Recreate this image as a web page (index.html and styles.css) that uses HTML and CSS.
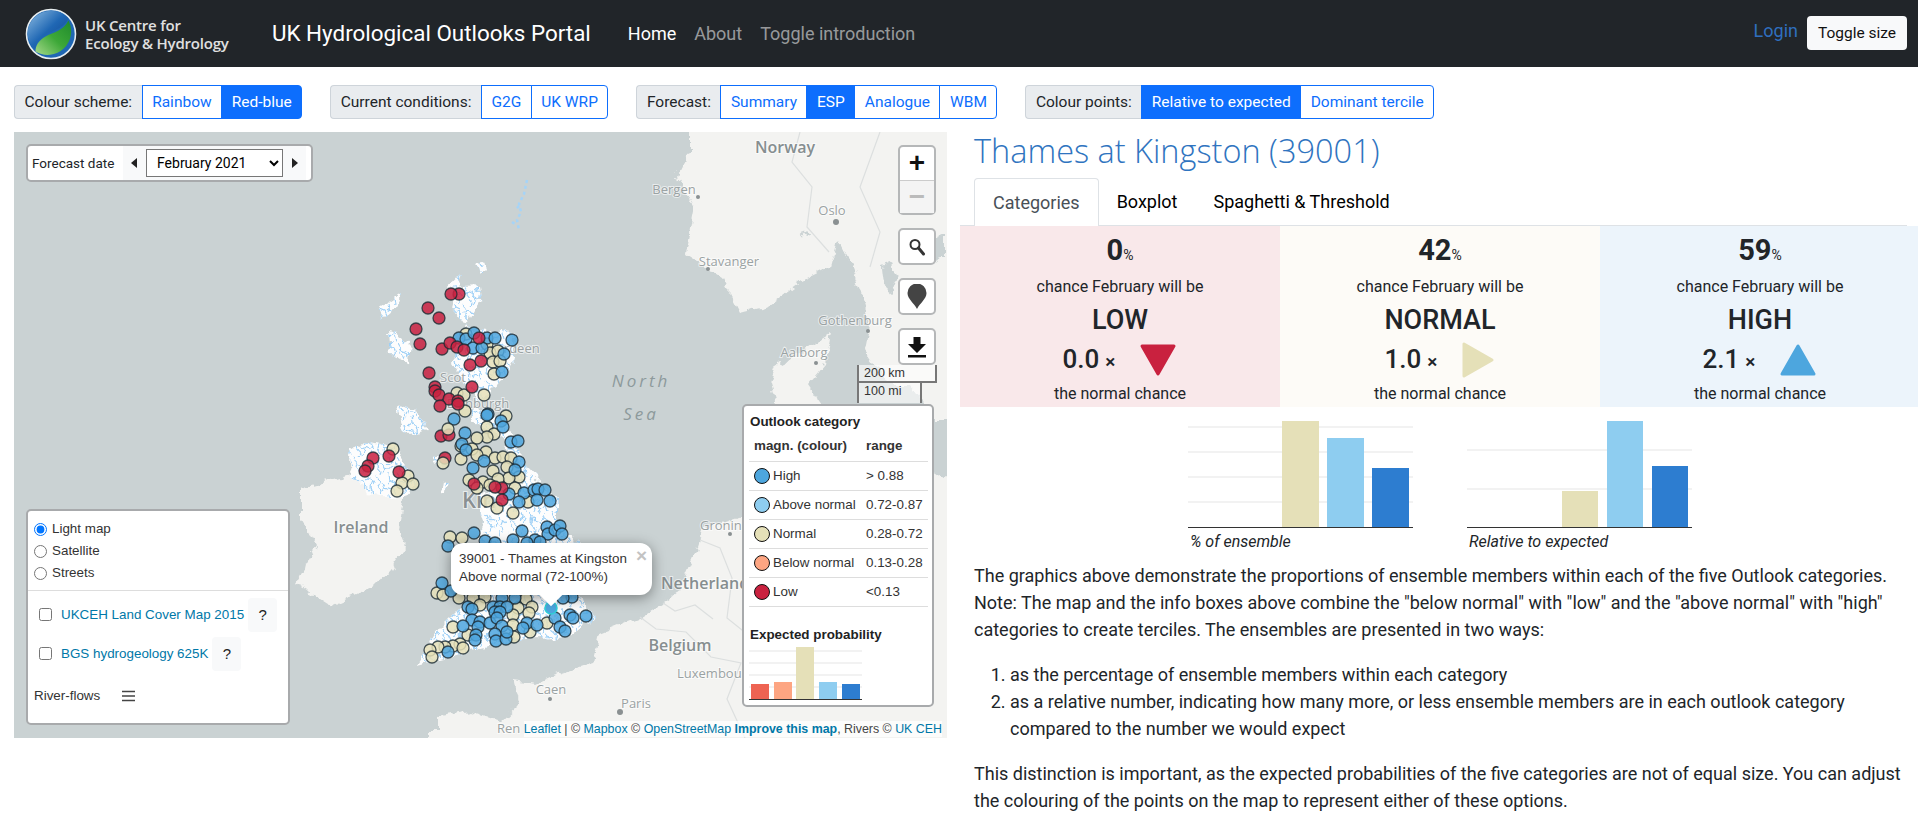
FILE: index.html
```html
<!DOCTYPE html>
<html lang="en">

<head>
  <meta charset="UTF-8">
  <meta name="viewport" content="width=device-width, initial-scale=1.0">
  <title>UK Hydrological Outlooks Portal</title>
  <link rel="stylesheet" href="styles.css">
</head>

<body>
  <nav class="navbar">
    <div class="logo">
      <svg class="logo-mark" width="52" height="52" viewBox="0 0 52 52">
        <defs>
          <linearGradient id="logoBlue" x1="0" y1="0" x2="1" y2="1">
            <stop offset="0" stop-color="#8fbde2" />
            <stop offset=".5" stop-color="#1f67b4" />
            <stop offset="1" stop-color="#123f86" />
          </linearGradient>
          <linearGradient id="logoGreen" x1="0" y1="1" x2="1" y2="0">
            <stop offset="0" stop-color="#a5d88a" />
            <stop offset=".5" stop-color="#3da838" />
            <stop offset="1" stop-color="#1f8a2c" />
          </linearGradient>
        </defs>
        <circle cx="26" cy="26" r="24.5" fill="#1f67b4" stroke="#e8eef0" stroke-width="1.6" />
        <path d="M2.5 26a23.5 23.5 0 0 1 41-15.5c-6 11-14 11-23 16-7 4-10 9-10 15A23.5 23.5 0 0 1 2.5 26z" fill="url(#logoBlue)" />
        <path d="M10.5 43.500c0-6 3-11 10-15 9-5 17-5 23-16A23.500 23.500 0 0 1 10.500 43.500z" fill="url(#logoGreen)" />
      </svg>
      <div class="logo-text">UK Centre for<br>Ecology &amp; Hydrology</div>
    </div>
    <a class="brand" href="#">UK Hydrological Outlooks Portal</a>
    <ul class="nav-links">
      <li><a class="active" href="#">Home</a></li>
      <li><a href="#">About</a></li>
      <li><a href="#">Toggle introduction</a></li>
    </ul>
    <a class="login" href="#">Login</a>
    <button class="toggle-size">Toggle size</button>
  </nav>

  <div class="toolbar">
    <div class="input-group">
      <span class="group-label">Colour scheme:</span>
      <button class="opt">Rainbow</button>
      <button class="opt on">Red-blue</button>
    </div>
    <div class="input-group">
      <span class="group-label">Current conditions:</span>
      <button class="opt">G2G</button>
      <button class="opt">UK WRP</button>
    </div>
    <div class="input-group">
      <span class="group-label">Forecast:</span>
      <button class="opt">Summary</button>
      <button class="opt on">ESP</button>
      <button class="opt">Analogue</button>
      <button class="opt">WBM</button>
    </div>
    <div class="input-group">
      <span class="group-label">Colour points:</span>
      <button class="opt on">Relative to expected</button>
      <button class="opt">Dominant tercile</button>
    </div>
  </div>

  <main class="content">
    <div class="map">
      <svg class="basemap" width="933" height="606" viewBox="14 132 933 606">
        <defs>
          <pattern id="rivers" width="22" height="19" patternUnits="userSpaceOnUse">
            <path d="M2 1l3 5-1 4 4 5-1 4M5 6l5 2 2 4 5 2M12 12l-2 5M15 0l1 5 4 2 2 4M16 5l-3 2M20 7l-2 5 2 7" />
          </pattern>
          <filter id="rough" x="-5%" y="-5%" width="110%" height="110%">
            <feTurbulence type="fractalNoise" baseFrequency=".09" numOctaves="3" seed="4" />
            <feDisplacementMap in="SourceGraphic" scale="11" xChannelSelector="R" yChannelSelector="G" />
          </filter>
          <filter id="soft">
            <feGaussianBlur stdDeviation=".35" />
          </filter>
        </defs>

        <g filter="url(#rough)">
          <!-- Norway and Sweden -->
          <path class="land" d="M695 132l-5 18-13 27 18 31-9 47 36 23 18 35 28-7 32-24 31-15 7-27 12 23 10 27 10 35-5 25 25 35 20 0 20 25 18 0V132z" />
          <path class="land" d="M690 115h280v40h-280zM935 120h30v300h-30z" />
          <!-- France up to Denmark -->
          <path class="land" d="M437 738v-20l33-6 30 10 18-17-6-25 25 3 13-6 43-14 7-30 40-16 23-14 17-13 15-35 9-27 41-12 35-16-10-60 5-40-5-16 7-20 28-14 26-17-6 32-17 20 17 25-25 20 30 10h40l35 10 43 30v258z" />
          <path class="land" d="M430 730h540v30h-540zM935 480h30v270h-30z" />
          <path class="land" d="M800 420l18-6 8 14-14 8z" />
          <!-- Ireland -->
          <path class="land" d="M349 450l18-8 28 4 22 35-13 18 0 2-5 27 7 19-16 24-14 15-45 20-36-23 22-36-16-27 0-31 30-8 20-6-2-6z" />

          <!-- Great Britain, the rivers reuse the same outlines -->
          <g class="land white">
            <path id="gb" d="M447 288l32-2 2 12-18 31 50 4v27l-14 24-13 11-14 8 36 23 19 40 31 35v23l21 20-5 40 20 34-27 19-55 4-46 12-50 12 23-36 40-40-4-35 9-31-5-27 41-12v-16l-18-31-32-15 5-24-23-35 14-35-14-20 9-35z" />
            <path id="isles" d="M401 294l-4 12-16 15-2-12zM388 333l22 7-2 25-18-10zM397 405l18 5 13 20-23 5zM430 458l17-2-7 14zM442 482l6-2-2 12-6 2zM476 262l8-1 2 8-6 6z" />
            <path id="ulster" d="M351 475l-2-25 18-8 28 4 22 35-13 18-37-6z" />
          </g>
          <use href="#gb" fill="url(#rivers)" />
          <use href="#isles" fill="url(#rivers)" />
          <use href="#ulster" fill="url(#rivers)" />

          <!-- lakes -->
          <path class="lake" d="M880 267l12-4 6 14-6 16-10-8zM845 250l5 16 4-4zM800 232l12 4-6 3zM930 240l14-6v24l-10 4z" />
        </g>

        <path class="shetland" d="M527 180l-3 14-5 10 2 8-4 8 2 10M512 222l3 2M519 206l-4 4" />
        <path class="border" d="M800 132l-8 30 20 25-5 40 22 25M880 132l-20 55 20 45-10 35M640 617l16 12 30 3 25 25 30 6 -14 36 18 39M700 540l20 8 12 30-5 40 25 20M663 603l12 8 20-6 18 14M745 516l8 18" />

        <!-- place names -->
        <text class="place big" x="785" y="153" text-anchor="middle">Norway</text>
        <text class="place" x="674" y="194" text-anchor="middle">Bergen</text>
        <text class="place" x="832" y="215" text-anchor="middle">Oslo</text>
        <text class="place" x="729" y="266" text-anchor="middle">Stavanger</text>
        <text class="place" x="855" y="325" text-anchor="middle">Gothenburg</text>
        <text class="place" x="804" y="357" text-anchor="middle">Aalborg</text>
        <text class="place sea" x="641" y="387" text-anchor="middle">North</text>
        <text class="place sea" x="641" y="420" text-anchor="middle">Sea</text>
        <text class="place big" x="361" y="533" text-anchor="middle">Ireland</text>
        <text class="place" x="700" y="530">Gronin</text>
        <text class="place big" x="661" y="589">Netherlands</text>
        <text class="place big" x="680" y="651" text-anchor="middle">Belgium</text>
        <text class="place" x="677" y="678">Luxembou</text>
        <text class="place" x="551" y="694" text-anchor="middle">Caen</text>
        <text class="place" x="636" y="708" text-anchor="middle">Paris</text>
        <text class="place" x="497" y="733">Ren</text>
        <text class="place" x="510" y="353" text-anchor="middle">Aberdeen</text>
        <text class="place" x="453" y="382" text-anchor="middle">Scot</text>
        <text class="place" x="478" y="408" text-anchor="middle">Edinburgh</text>
        <text class="place kingdom" x="462" y="508">Kin</text>
        <circle class="city" cx="698" cy="197" r="2" />
        <circle class="city" cx="836" cy="222" r="3" />
        <circle class="city" cx="708" cy="269" r="2" />
        <circle class="city" cx="868" cy="331" r="2" />
        <circle class="city" cx="816" cy="363" r="2" />
        <circle class="city" cx="730" cy="534" r="2" />
        <circle class="city" cx="550" cy="699" r="2" />
        <circle class="city" cx="620" cy="712" r="3" />

        <!-- points -->
        <g class="pts beige">
          <circle cx="466" cy="334" /><circle cx="487" cy="344" /><circle cx="490" cy="353" /><circle cx="498" cy="351" /><circle cx="493" cy="362" /><circle cx="500" cy="361" /><circle cx="494" cy="374" /><circle cx="457" cy="393" /><circle cx="464" cy="395" /><circle cx="484" cy="395" /><circle cx="465" cy="411" /><circle cx="506" cy="416" /><circle cx="487" cy="427" /><circle cx="494" cy="434" /><circle cx="487" cy="437" /><circle cx="477" cy="438" /><circle cx="461" cy="446" /><circle cx="472" cy="449" /><circle cx="486" cy="452" /><circle cx="477" cy="455" /><circle cx="461" cy="459" /><circle cx="495" cy="458" /><circle cx="503" cy="457" /><circle cx="511" cy="458" /><circle cx="507" cy="467" /><circle cx="493" cy="471" /><circle cx="519" cy="477" /><circle cx="509" cy="478" /><circle cx="498" cy="479" /><circle cx="469" cy="480" /><circle cx="483" cy="482" /><circle cx="490" cy="485" /><circle cx="477" cy="488" /><circle cx="515" cy="488" /><circle cx="487" cy="501" /><circle cx="497" cy="508" /><circle cx="513" cy="513" /><circle cx="528" cy="502" /><circle cx="408" cy="476" /><circle cx="402" cy="483" /><circle cx="413" cy="484" /><circle cx="397" cy="491" /><circle cx="393" cy="449" /><circle cx="450" cy="537" /><circle cx="462" cy="538" /><circle cx="437" cy="593" /><circle cx="443" cy="595" /><circle cx="459" cy="598" /><circle cx="473" cy="598" /><circle cx="485" cy="597" /><circle cx="480" cy="605" /><circle cx="526" cy="599" /><circle cx="518" cy="608" /><circle cx="532" cy="607" /><circle cx="529" cy="613" /><circle cx="513" cy="615" /><circle cx="513" cy="625" /><circle cx="547" cy="623" /><circle cx="453" cy="627" /><circle cx="468" cy="635" /><circle cx="514" cy="637" /><circle cx="530" cy="632" /><circle cx="460" cy="644" /><circle cx="453" cy="646" /><circle cx="445" cy="647" /><circle cx="438" cy="647" /><circle cx="430" cy="650" /><circle cx="432" cy="657" /><circle cx="463" cy="648" />
        </g>
        <g class="pts blue">
          <circle cx="459" cy="338" /><circle cx="466" cy="339" /><circle cx="474" cy="333" /><circle cx="487" cy="338" /><circle cx="495" cy="338" /><circle cx="512" cy="340" /><circle cx="473" cy="348" /><circle cx="482" cy="348" /><circle cx="504" cy="354" /><circle cx="502" cy="372" /><circle cx="454" cy="419" /><circle cx="488" cy="414" /><circle cx="487" cy="415" /><circle cx="501" cy="421" /><circle cx="503" cy="427" /><circle cx="465" cy="433" /><circle cx="462" cy="444" /><circle cx="466" cy="450" /><circle cx="511" cy="442" /><circle cx="518" cy="441" /><circle cx="484" cy="461" /><circle cx="473" cy="468" /><circle cx="519" cy="462" /><circle cx="515" cy="470" /><circle cx="524" cy="493" /><circle cx="534" cy="490" /><circle cx="538" cy="489" /><circle cx="545" cy="490" /><circle cx="537" cy="500" /><circle cx="550" cy="501" /><circle cx="519" cy="502" /><circle cx="509" cy="494" /><circle cx="522" cy="531" /><circle cx="547" cy="527" /><circle cx="548" cy="534" /><circle cx="555" cy="530" /><circle cx="560" cy="526" /><circle cx="562" cy="534" /><circle cx="474" cy="533" /><circle cx="448" cy="546" /><circle cx="485" cy="541" /><circle cx="495" cy="543" /><circle cx="513" cy="540" /><circle cx="535" cy="540" /><circle cx="540" cy="542" /><circle cx="527" cy="543" /><circle cx="442" cy="583" /><circle cx="451" cy="591" /><circle cx="502" cy="598" /><circle cx="515" cy="598" /><circle cx="572" cy="597" /><circle cx="563" cy="598" /><circle cx="468" cy="607" /><circle cx="472" cy="609" /><circle cx="493" cy="607" /><circle cx="500" cy="607" /><circle cx="507" cy="607" /><circle cx="495" cy="612" /><circle cx="500" cy="612" /><circle cx="555" cy="618" /><circle cx="570" cy="615" /><circle cx="573" cy="618" /><circle cx="586" cy="616" /><circle cx="472" cy="620" /><circle cx="480" cy="622" /><circle cx="478" cy="627" /><circle cx="490" cy="623" /><circle cx="497" cy="618" /><circle cx="502" cy="626" /><circle cx="527" cy="623" /><circle cx="523" cy="628" /><circle cx="537" cy="625" /><circle cx="463" cy="626" /><circle cx="560" cy="627" /><circle cx="565" cy="631" /><circle cx="476" cy="635" /><circle cx="475" cy="640" /><circle cx="495" cy="634" /><circle cx="496" cy="641" /><circle cx="506" cy="639" /><circle cx="507" cy="632" /><circle cx="448" cy="652" />
        </g>
        <g class="pts red">
          <circle cx="459" cy="294" /><circle cx="451" cy="294" /><circle cx="428" cy="308" /><circle cx="439" cy="318" /><circle cx="416" cy="329" /><circle cx="420" cy="344" /><circle cx="442" cy="349" /><circle cx="450" cy="343" /><circle cx="457" cy="347" /><circle cx="464" cy="350" /><circle cx="479" cy="338" /><circle cx="470" cy="365" /><circle cx="481" cy="361" /><circle cx="429" cy="373" /><circle cx="435" cy="387" /><circle cx="435" cy="391" /><circle cx="439" cy="395" /><circle cx="449" cy="399" /><circle cx="458" cy="401" /><circle cx="458" cy="404" /><circle cx="440" cy="406" /><circle cx="472" cy="387" /><circle cx="441" cy="436" /><circle cx="449" cy="435" /><circle cx="445" cy="458" /><circle cx="389" cy="456" /><circle cx="399" cy="472" /><circle cx="373" cy="458" /><circle cx="368" cy="466" /><circle cx="365" cy="471" /><circle cx="474" cy="484" /><circle cx="502" cy="488" /><circle cx="502" cy="500" /><circle cx="495" cy="487" />
        </g>
        <g class="pts beige">
          <circle cx="448" cy="429" /><circle cx="443" cy="463" />
        </g>
        <circle class="picked" cx="551" cy="608" r="6" />
      </svg>

      <div class="date-box">
        <span class="date-label">Forecast date</span>
        <div class="date-picker">
          <span class="tri tri-left"></span>
          <select class="date-select">
            <option>February 2021</option>
          </select>
          <span class="tri tri-right"></span>
        </div>
      </div>

      <div class="map-tools">
        <div class="tool-box zoom-box">
          <a class="zoom-in">+</a>
          <a class="zoom-out">&#8722;</a>
        </div>
        <a class="tool-box tool">
          <svg width="20" height="20" viewBox="0 0 20 20"><circle cx="8" cy="7.500" r="4.500" fill="none" stroke="#333" stroke-width="2" /><path d="M11.500 11l5 6" stroke="#333" stroke-width="3" stroke-linecap="round" /></svg>
        </a>
        <a class="tool-box tool">
          <svg width="20" height="26" viewBox="0 0 20 26"><path d="M10 25C7 19 .5 15 .5 9a9.500 9.500 0 0 1 19 0c0 6-6.500 10-9.500 16z" fill="#444" /></svg>
        </a>
        <a class="tool-box tool">
          <svg width="20" height="22" viewBox="0 0 20 22"><path d="M6.500 1h7v7H19l-9 9-9-9h5.500zM1 19h18v2.500H1z" fill="#111" /></svg>
        </a>
      </div>

      <div class="scale">
        <div class="scale-km">200 km</div>
        <div class="scale-mi">100 mi</div>
      </div>

      <div class="popup">
        <a class="popup-close">&#215;</a>
        39001 - Thames at Kingston<br>Above normal (72-100%)
        <span class="popup-tip"></span>
      </div>

      <div class="layers">
        <label class="base"><input type="radio" name="base" checked> Light map</label>
        <label class="base"><input type="radio" name="base"> Satellite</label>
        <label class="base"><input type="radio" name="base"> Streets</label>
        <div class="layers-sep"></div>
        <div class="overlay"><input type="checkbox"><a href="#">UKCEH Land Cover Map 2015</a><button class="help">?</button></div>
        <div class="overlay"><input type="checkbox"><a href="#">BGS hydrogeology 625K</a><button class="help">?</button></div>
        <div class="river">River-flows <svg width="13" height="12" viewBox="0 0 13 12"><path d="M0 1.500h13M0 6h13M0 10.500h13" stroke="#444" stroke-width="1.300" /></svg></div>
      </div>

      <div class="legend">
        <div class="legend-title">Outlook category</div>
        <table class="legend-table">
          <tr><th>magn. (colour)</th><th>range</th></tr>
          <tr><td><i class="dot c-high"></i>High</td><td>&gt; 0.88</td></tr>
          <tr><td><i class="dot c-above"></i>Above normal</td><td>0.72-0.87</td></tr>
          <tr><td><i class="dot c-normal"></i>Normal</td><td>0.28-0.72</td></tr>
          <tr><td><i class="dot c-below"></i>Below normal</td><td>0.13-0.28</td></tr>
          <tr><td><i class="dot c-low"></i>Low</td><td>&lt;0.13</td></tr>
        </table>
        <div class="legend-title prob-title">Expected probability</div>
        <svg class="prob" width="113" height="54" viewBox="0 0 113 54">
          <path class="grid" d="M0 5h113M0 17h113M0 29h113M0 41h113" />
          <rect x="2" y="38" width="18" height="16" fill="#ee6352" />
          <rect x="25" y="36" width="18" height="18" fill="#fda582" />
          <rect x="47" y="1" width="18" height="53" fill="#e5e0b8" />
          <rect x="70" y="36" width="18" height="18" fill="#8ecdf0" />
          <rect x="93" y="38" width="18" height="16" fill="#2d7dd0" />
          <path class="axis" d="M0 53.500h113" />
        </svg>
      </div>

      <div class="attribution"><a href="#">Leaflet</a> | &copy; <a href="#">Mapbox</a> &copy; <a href="#">OpenStreetMap</a> <a class="strong" href="#">Improve this map</a>, Rivers &copy; <a href="#">UK CEH</a></div>
    </div>

    <section class="detail">
      <h2 class="station">Thames at Kingston (39001)</h2>
      <div class="tabs">
        <a class="tab current">Categories</a>
        <a class="tab">Boxplot</a>
        <a class="tab">Spaghetti &amp; Threshold</a>
      </div>

      <div class="terciles">
        <div class="tercile low">
          <div class="pct">0<small>%</small></div>
          <div class="chance">chance February will be</div>
          <div class="cat">LOW</div>
          <div class="ratio">
            <span class="ratio-num">0.0<small>&#215;</small></span>
            <svg width="38" height="34" viewBox="0 0 38 34"><path d="M3 3h32L19 31z" fill="#c9213f" stroke="#c9213f" stroke-width="3" stroke-linejoin="round" /></svg>
          </div>
          <div class="chance">the normal chance</div>
        </div>
        <div class="tercile normal">
          <div class="pct">42<small>%</small></div>
          <div class="chance">chance February will be</div>
          <div class="cat">NORMAL</div>
          <div class="ratio">
            <span class="ratio-num">1.0<small>&#215;</small></span>
            <svg width="34" height="38" viewBox="0 0 34 38"><path d="M3 3v32L31 19z" fill="#e5e0b8" stroke="#e5e0b8" stroke-width="3" stroke-linejoin="round" /></svg>
          </div>
          <div class="chance">the normal chance</div>
        </div>
        <div class="tercile high">
          <div class="pct">59<small>%</small></div>
          <div class="chance">chance February will be</div>
          <div class="cat">HIGH</div>
          <div class="ratio">
            <span class="ratio-num">2.1<small>&#215;</small></span>
            <svg width="38" height="34" viewBox="0 0 38 34"><path d="M3 31h32L19 3z" fill="#4da6de" stroke="#4da6de" stroke-width="3" stroke-linejoin="round" /></svg>
          </div>
          <div class="chance">the normal chance</div>
        </div>
      </div>

      <div class="charts">
        <figure class="chart">
          <svg width="225" height="108" viewBox="0 0 225 108">
            <path class="grid" d="M0 7h225M0 32h225M0 57h225M0 82h225" />
            <rect x="94" y="1" width="37" height="107" fill="#e5e0b8" />
            <rect x="139" y="18" width="37" height="90" fill="#8ecdf0" />
            <rect x="184" y="48" width="37" height="60" fill="#2d7dd0" />
            <path class="axis" d="M0 107.500h225" />
          </svg>
          <figcaption>% of ensemble</figcaption>
        </figure>
        <figure class="chart">
          <svg width="225" height="108" viewBox="0 0 225 108">
            <path class="grid" d="M0 30h225M0 69h225" />
            <rect x="95" y="71" width="36" height="37" fill="#e5e0b8" />
            <rect x="140" y="1" width="36" height="107" fill="#8ecdf0" />
            <rect x="185" y="46" width="36" height="62" fill="#2d7dd0" />
            <path class="axis" d="M0 107.500h225" />
          </svg>
          <figcaption>Relative to expected</figcaption>
        </figure>
      </div>

      <div class="text">
        <p>The graphics above demonstrate the proportions of ensemble members within each of the five Outlook categories. Note: The map and the info boxes above combine the "below normal" with "low" and the "above normal" with "high" categories to create terciles. The ensembles are presented in two ways:</p>
        <ol>
          <li>as the percentage of ensemble members within each category</li>
          <li>as a relative number, indicating how many more, or less ensemble members are in each outlook category compared to the number we would expect</li>
        </ol>
        <p>This distinction is important, as the expected probabilities of the five categories are not of equal size. You can adjust the colouring of the points on the map to represent either of these options.</p>
      </div>
    </section>
  </main>
</body>

</html>
```

FILE: styles.css
```css
* {
  box-sizing: border-box;
}

html,
body {
  margin: 0;
  overflow-x: hidden;
}

body {
  font-family: Roboto, "Liberation Sans", sans-serif;
  font-size: 18px;
  line-height: 27px;
  color: #212529;
  background: #fff;
}

a {
  text-decoration: none;
}

/* top bar */
.navbar {
  display: flex;
  align-items: center;
  height: 67px;
  padding: 0 11px 0 25px;
  background: #212529;
}

.logo {
  display: flex;
  align-items: center;
  width: 247px;
}

.logo-mark {
  margin-right: 8px;
}

.logo-text {
  font-family: "Open Sans", sans-serif;
  font-size: 15px;
  font-weight: 600;
  line-height: 18px;
  letter-spacing: -.2px;
  color: #e0e0e0;
  white-space: nowrap;
}

.brand {
  font-size: 22.400px;
  color: #fff;
  white-space: nowrap;
}

.nav-links {
  display: flex;
  gap: 18px;
  margin: 0 0 0 37px;
  padding: 0;
  list-style: none;
}

.nav-links a {
  font-size: 18px;
  color: rgba(255, 255, 255, .55);
}

.nav-links a.active {
  color: #fff;
}

.login {
  margin: -6px 9px 0 auto;
  font-size: 18px;
  color: #2f6fbf;
}

.toggle-size {
  width: 100px;
  height: 34px;
  margin-bottom: 1px;
  border: 0;
  border-radius: 4px;
  font: 15.500px Roboto, sans-serif;
  color: #111;
  background: #f8f9fa;
}

/* option groups */
.toolbar {
  display: flex;
  gap: 28px;
  padding: 18px 0 0 14px;
}

.input-group {
  display: flex;
  height: 34px;
  font-size: 15.500px;
  line-height: 32px;
}

.group-label {
  padding: 0 9.500px;
  border: 1px solid #ced4da;
  border-right: 0;
  border-radius: 4px 0 0 4px;
  background: #e9ecef;
  white-space: nowrap;
}

.opt {
  margin-left: -1px;
  padding: 0 9.500px;
  border: 1px solid #0d6efd;
  font: inherit;
  color: #0d6efd;
  background: #fff;
  white-space: nowrap;
}

.opt:first-of-type {
  margin-left: 0;
}

.opt:last-child {
  border-radius: 0 4px 4px 0;
}

.opt.on {
  color: #fff;
  background: #0d6efd;
}

/* page columns */
.content {
  display: flex;
  align-items: flex-start;
  padding: 13px 0 0 14px;
}

/* map */
.map {
  position: relative;
  flex: none;
  width: 933px;
  height: 606px;
  overflow: hidden;
  background: #cad2d3;
  font-family: "Liberation Sans", Arial, sans-serif;
  font-size: 13.400px;
  line-height: 18px;
}

.basemap {
  display: block;
}

.land {
  fill: #f3f3f1;
}

.land.white {
  fill: #fdfdfd;
}

.lake {
  fill: #cad2d3;
}

.border {
  fill: none;
  stroke: #dcdfdf;
  stroke-width: 1.200;
}

#rivers path {
  fill: none;
  stroke: #9ccff6;
  stroke-width: 1.100;
}

.shetland {
  fill: none;
  stroke: #a6d4f7;
  stroke-width: 2.500;
  stroke-dasharray: 3 3;
}

.pts {
  filter: url(#soft);
}

.pts circle {
  r: 6px;
  stroke: #1c2b33;
  stroke-width: 1.300;
  stroke-opacity: .8;
  fill-opacity: .85;
}

.pts.blue circle {
  fill: #4da6de;
}

.pts.red circle {
  fill: #c9213f;
}

.pts.beige circle {
  fill: #e5e0b8;
}

.picked {
  fill: #4da6de;
  stroke: #2fd0d8;
  stroke-width: 1.500;
}

.place {
  font-family: "Open Sans", sans-serif;
  font-size: 13px;
  fill: #9aa2a3;
  stroke: rgba(255, 255, 255, .6);
  stroke-width: 2px;
  paint-order: stroke;
}

.place.big {
  font-size: 16px;
  font-weight: 600;
  fill: #868e90;
}

.place.sea {
  font-size: 17px;
  font-style: italic;
  letter-spacing: 3px;
  fill: #8d9a9c;
  stroke: none;
}

.place.kingdom {
  font-size: 22px;
  font-weight: 600;
  fill: #8a9092;
}

.city {
  fill: #8a9092;
}

/* forecast date */
.date-box {
  position: absolute;
  top: 12px;
  left: 12px;
  display: flex;
  align-items: center;
  width: 287px;
  height: 38px;
  padding-left: 4px;
  border: 2px solid #a8aaac;
  border-radius: 5px;
  background: #fff;
  font-family: Roboto, sans-serif;
  font-size: 13.500px;
}

.date-label {
  width: 91px;
  white-space: nowrap;
}

.date-picker {
  display: flex;
  align-items: center;
  height: 34px;
  padding: 0 8px;
  gap: 9px;
  background: #f8f9fa;
}

.date-select {
  width: 137px;
  height: 28px;
  padding-left: 6px;
  border: 1px solid #777;
  border-radius: 0;
  font: 14px Roboto, sans-serif;
  background: #fff;
}

.tri {
  width: 0;
  height: 0;
  border-top: 5px solid transparent;
  border-bottom: 5px solid transparent;
}

.tri-left {
  border-right: 6px solid #222;
}

.tri-right {
  border-left: 6px solid #222;
}

/* map buttons */
.map-tools {
  position: absolute;
  top: 13px;
  right: 11px;
  display: flex;
  flex-direction: column;
  gap: 13px;
  width: 38px;
}

.tool-box {
  display: flex;
  flex-direction: column;
  align-items: center;
  justify-content: center;
  border: 2px solid #b5b7b8;
  border-radius: 5px;
  background: #fff;
}

.zoom-box {
  height: 70px;
}

.zoom-box a {
  flex: 1;
  width: 100%;
  font: 700 28px/32px "Liberation Sans", sans-serif;
  text-align: center;
  color: #111;
}

.zoom-box .zoom-out {
  border-top: 1px solid #ccc;
  color: #bbb;
  background: #f4f4f4;
}

.tool {
  height: 37px;
}

.scale {
  position: absolute;
  top: 233px;
  left: 843px;
  font-size: 12.500px;
  line-height: 17px;
  color: #333;
}

.scale-km {
  width: 80px;
  height: 18px;
  padding-left: 5px;
  border: 2px solid #777;
  border-top: 0;
  background: rgba(255, 255, 255, .6);
}

.scale-mi {
  width: 65px;
  height: 20px;
  padding-left: 5px;
  border: 2px solid #777;
  border-top: 0;
  border-bottom: 0;
  background: rgba(255, 255, 255, .6);
}

/* popup */
.popup {
  position: absolute;
  top: 411px;
  left: 437px;
  width: 201px;
  height: 52px;
  padding: 7px 8px;
  border-radius: 12px;
  background: #fff;
  box-shadow: 0 3px 14px rgba(0, 0, 0, .4);
  line-height: 18px;
  color: #333;
  white-space: nowrap;
}

.popup-close {
  position: absolute;
  top: 3px;
  right: 5px;
  font: 700 19px/20px "Liberation Sans", sans-serif;
  color: #c3c3c3;
}

.popup-tip {
  position: absolute;
  top: 44px;
  left: 92px;
  width: 16px;
  height: 16px;
  background: #fff;
  transform: rotate(45deg);
}

/* layer control */
.layers {
  position: absolute;
  top: 377px;
  left: 12px;
  width: 264px;
  height: 216px;
  padding: 7px 6px;
  border: 2px solid #a8aaac;
  border-radius: 5px;
  background: #fff;
  color: #333;
}

.base {
  display: flex;
  align-items: center;
  gap: 4px;
  height: 22px;
}

.base input {
  margin: 0 1px 0 0;
}

.layers-sep {
  margin: 6px -6px 4px;
  border-top: 1px solid #ddd;
}

.overlay {
  display: flex;
  align-items: center;
  height: 39px;
  padding-left: 5px;
}

.overlay input {
  margin: 0 9px 0 0;
  width: 13px;
  height: 13px;
}

.overlay a {
  color: #0078a8;
  white-space: nowrap;
}

.help {
  width: 29px;
  height: 34px;
  margin-left: 4px;
  border: 0;
  border-radius: 4px;
  font: 15px "Liberation Sans", sans-serif;
  color: #222;
  background: #f8f9fa;
}

.river {
  display: flex;
  align-items: center;
  gap: 22px;
  margin-top: 14px;
}

/* legend */
.legend {
  position: absolute;
  top: 272px;
  left: 728px;
  width: 192px;
  height: 303px;
  padding: 7px 5px 0;
  border: 2px solid #a8aaac;
  border-radius: 5px;
  background: #fff;
  color: #333;
}

.legend-title {
  padding-left: 1px;
  font-weight: 700;
  white-space: nowrap;
  color: #222;
}

.legend-table {
  width: 179px;
  margin-top: 1px;
  border-collapse: collapse;
}

.legend-table th,
.legend-table td {
  height: 29px;
  padding: 0 0 0 5px;
  border-bottom: 1px solid #ddd;
  text-align: left;
  white-space: nowrap;
}

.legend-table th:first-child {
  width: 112px;
}

.dot {
  display: inline-block;
  width: 16px;
  height: 16px;
  margin-right: 3px;
  border: 1px solid #111;
  border-radius: 50%;
  vertical-align: -4px;
}

.c-high {
  background: #4da6de;
}

.c-above {
  background: #8ecdf0;
}

.c-normal {
  background: #e5e0b8;
}

.c-below {
  background: #fda582;
}

.c-low {
  background: #c9213f;
}

.prob-title {
  margin-top: 19px;
}

.prob {
  display: block;
  margin-top: 2px;
}

.grid {
  fill: none;
  stroke: #eee;
  stroke-width: 1.500;
}

.axis {
  fill: none;
  stroke: #333;
  stroke-width: 1;
}

.attribution {
  position: absolute;
  right: 5px;
  bottom: 1px;
  font-size: 12.400px;
  line-height: 16px;
  color: #444;
  background: rgba(255, 255, 255, .7);
  white-space: nowrap;
}

.attribution a {
  color: #0078a8;
}

.attribution .strong {
  font-weight: 700;
}

/* right column */
.detail {
  flex: none;
  width: 960px;
  margin-left: 13px;
}

.station {
  margin: -4px 0 4px;
  padding-left: 14px;
  font-family: "Open Sans", sans-serif;
  font-size: 32.500px;
  font-weight: 300;
  line-height: 46px;
  color: #2f74c0;
}

.tabs {
  display: flex;
  width: 947px;
  padding-left: 14px;
  height: 48px;
  box-shadow: inset 0 -1px 0 #dee2e6;
}

.tab {
  padding: 10px 18px;
  color: #000;
  white-space: nowrap;
}

.tab.current {
  border: 1px solid #dee2e6;
  border-bottom: 0;
  border-radius: 4px 4px 0 0;
  color: #495057;
  background: #fff;
}

.terciles {
  display: grid;
  grid-template-columns: repeat(3, 320px);
  height: 181px;
}

.tercile {
  padding-top: 5px;
  text-align: center;
}

.tercile.low {
  background: #f9e8ea;
}

.tercile.normal {
  background: #fdfbf7;
}

.tercile.high {
  background: #ecf4fb;
}

.pct {
  font-size: 29px;
  font-weight: 700;
  line-height: 38px;
}

.pct small {
  font-size: 14px;
  font-weight: 400;
}

.chance {
  font-size: 16px;
  line-height: 24px;
}

.tercile > .chance:nth-child(2) {
  margin-top: 1px;
}

.cat {
  margin-top: 4px;
  font-size: 27px;
  font-weight: 500;
  line-height: 34px;
}

.ratio {
  display: flex;
  align-items: center;
  justify-content: center;
  gap: 24px;
  height: 40px;
  margin-top: 3px;
}

.ratio + .chance {
  margin-top: 2px;
}

.ratio-num {
  font-size: 26px;
  font-weight: 500;
  line-height: 40px;
}

.ratio-num small {
  margin-left: 6px;
  font-size: 19px;
}

.charts {
  display: flex;
  justify-content: center;
  gap: 54px;
  margin-top: 13px;
}

.chart {
  margin: 0;
  width: 225px;
}

.chart svg {
  display: block;
}

.chart figcaption {
  padding-left: 2px;
  font-size: 16px;
  font-style: italic;
  line-height: 28px;
}

.text {
  padding: 6px 19px 0 14px;
}

.text p {
  margin: 0 0 18px;
}

.text ol {
  margin: 0 0 18px;
  padding-left: 36px;
}
```
